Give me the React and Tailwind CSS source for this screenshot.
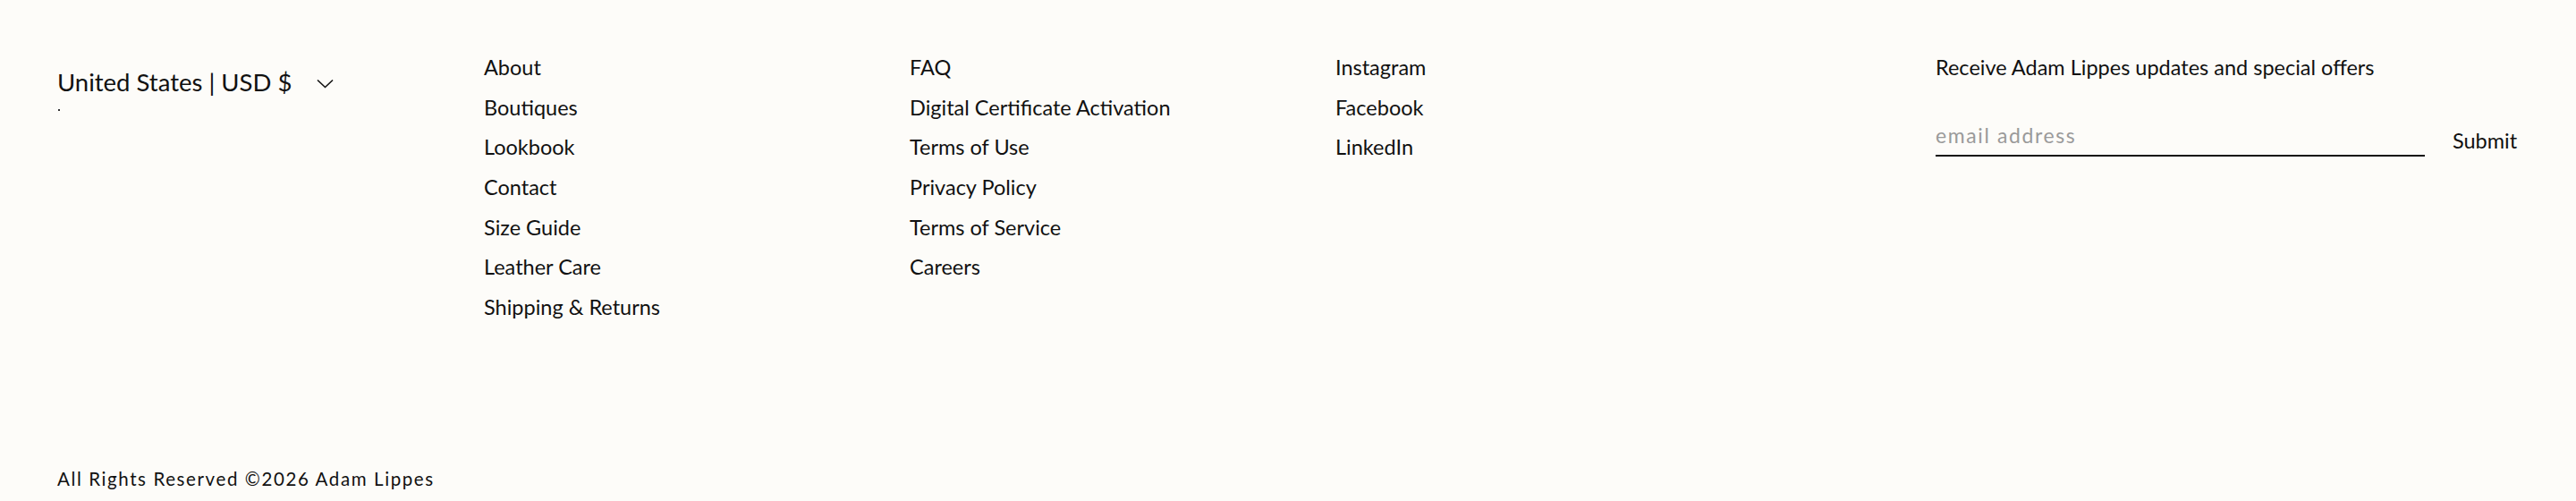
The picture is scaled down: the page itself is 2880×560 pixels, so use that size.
import { useState } from 'react'

const company = ['About', 'Boutiques', 'Lookbook', 'Contact', 'Size Guide', 'Leather Care', 'Shipping & Returns']
const help = ['FAQ', 'Digital Certificate Activation', 'Terms of Use', 'Privacy Policy', 'Terms of Service', 'Careers']
const social = ['Instagram', 'Facebook', 'LinkedIn']

function LinkColumn({ links }) {
  return (
    <ul className="w-[476px] shrink-0 pt-[53px]">
      {links.map((link) => (
        <li key={link} className="text-[23.5px] leading-[44.67px] text-[#111]">
          <a href="#">{link}</a>
        </li>
      ))}
    </ul>
  )
}

export default function App() {
  const [email, setEmail] = useState('')

  return (
    <footer
      className="h-[560px] w-full bg-[#fdfcf9] text-[#111] flex flex-col px-[64px]"
      style={{ fontFamily: 'Lato, "Noto Sans", sans-serif' }}
    >
      <div className="flex justify-between">
        <div className="flex">
          {/* Country selector */}
          <div className="w-[477px] shrink-0 pt-[75px]">
            <button className="flex items-center text-[27.5px] leading-[33px]">
              <span>United States | USD $</span>
              <svg className="ml-[28px] mt-[4px]" width="19" height="11" viewBox="0 0 19 11" fill="none">
                <path d="M1 1.5 L9.5 9.5 L18 1.5" stroke="#111" strokeWidth="1.6" />
              </svg>
            </button>
            <div className="mt-[14px] ml-[1px] h-[1.5px] w-[2px] bg-[#333]" />
          </div>
          <LinkColumn links={company} />
          <LinkColumn links={help} />
          <LinkColumn links={social} />
        </div>

        {/* Newsletter */}
        <div className="w-[652px] shrink-0 pt-[53px]">
          <p className="text-[23.5px] leading-[44.67px]">Receive Adam Lippes updates and special offers</p>
          <form className="mt-[37px] flex items-start" onSubmit={(e) => e.preventDefault()}>
            <input
              type="email"
              value={email}
              onChange={(e) => setEmail(e.target.value)}
              placeholder="email address"
              className="w-[547px] h-[40px] pb-[5px] border-b-2 border-[#111] bg-transparent text-[23px] tracking-[1.6px] outline-none placeholder:text-[#9a9a9a]"
            />
            <button type="submit" className="ml-[31px] mt-[8px] text-[23.5px] leading-[28px]">
              Submit
            </button>
          </form>
        </div>
      </div>

      <p className="mt-auto pb-[13px] text-[20.5px] leading-[24px] tracking-[1.6px]">All Rights Reserved ©2026 Adam Lippes</p>
    </footer>
  )
}
